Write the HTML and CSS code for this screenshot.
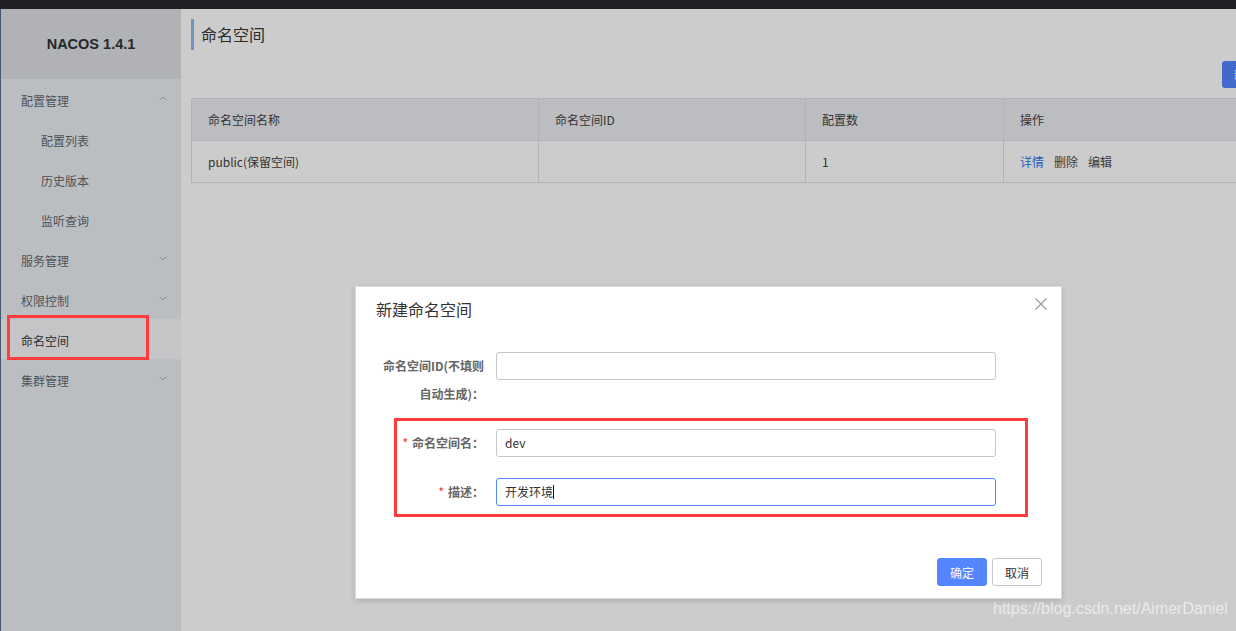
FILE: index.html
```html
<!DOCTYPE html>
<html lang="zh-CN">
<head>
<meta charset="utf-8">
<title>NACOS</title>
<link rel="stylesheet" href="styles.css">
</head>
<body>
<div class="topbar"></div>
<div class="layout">
  <aside class="sidebar">
    <div class="brand">NACOS 1.4.1</div>
    <ul class="menu">
      <li class="item"><span>配置管理</span><svg class="chev" viewBox="0 0 8 5" width="8" height="5"><path d="M0.5 4.5 L4 1 L7.5 4.5" fill="none" stroke="#8a8d92" stroke-width="1"/></svg></li>
      <li class="item sub"><span>配置列表</span></li>
      <li class="item sub"><span>历史版本</span></li>
      <li class="item sub"><span>监听查询</span></li>
      <li class="item"><span>服务管理</span><svg class="chev" viewBox="0 0 8 5" width="8" height="5"><path d="M0.5 0.5 L4 4 L7.5 0.5" fill="none" stroke="#8a8d92" stroke-width="1"/></svg></li>
      <li class="item"><span>权限控制</span><svg class="chev" viewBox="0 0 8 5" width="8" height="5"><path d="M0.5 0.5 L4 4 L7.5 0.5" fill="none" stroke="#8a8d92" stroke-width="1"/></svg></li>
      <li class="item active"><span>命名空间</span><i class="mark mark-menu"></i></li>
      <li class="item"><span>集群管理</span><svg class="chev" viewBox="0 0 8 5" width="8" height="5"><path d="M0.5 0.5 L4 4 L7.5 0.5" fill="none" stroke="#8a8d92" stroke-width="1"/></svg></li>
    </ul>
  </aside>
  <main class="main">
    <div class="content">
      <h1 class="page-title">命名空间</h1>
      <div class="toolbar"><button class="btn-new">新建命名空间</button></div>
      <table class="grid">
        <thead>
          <tr><th class="c1">命名空间名称</th><th class="c2">命名空间ID</th><th class="c3">配置数</th><th>操作</th></tr>
        </thead>
        <tbody>
          <tr><td>public(保留空间)</td><td></td><td>1</td><td><span class="op link">详情</span><span class="op">删除</span><span class="op">编辑</span></td></tr>
        </tbody>
      </table>
    </div>
  </main>
</div>

<div class="dialog">
  <div class="dlg-head">
    <span class="dlg-title">新建命名空间</span>
    <svg class="dlg-close" viewBox="0 0 12 12" width="12" height="12"><path d="M0.5 0.5 L11.5 11.5 M11.5 0.5 L0.5 11.5" stroke="#9a9a9a" stroke-width="1.2" fill="none"/></svg>
  </div>
  <div class="dlg-body">
    <div class="row">
      <label class="lbl">命名空间ID(不填则自动生成)：</label>
      <div class="input"></div>
    </div>
    <div class="group">
      <i class="mark mark-form"></i>
      <div class="row">
        <label class="lbl"><em class="req">*</em>命名空间名：</label>
        <div class="input">dev</div>
      </div>
      <div class="row">
        <label class="lbl"><em class="req">*</em>描述：</label>
        <div class="input focus">开发环境<span class="caret"></span></div>
      </div>
    </div>
  </div>
  <div class="dlg-foot">
    <button class="btn primary">确定</button>
    <button class="btn">取消</button>
  </div>
</div>

<div class="watermark">https://blog.csdn.net/AimerDaniel</div>
</body>
</html>
```

FILE: styles.css
```css
* { box-sizing: border-box; }
html, body { margin: 0; padding: 0; }
body {
  width: 1236px;
  height: 631px;
  overflow: hidden;
  background: #cccccc;
  font-family: "Noto Sans CJK SC", "Noto Sans", sans-serif;
  font-size: 12px;
  color: #333;
  position: relative;
}
.topbar { height: 9px; background: #1f2127; }
.layout { display: flex; height: 622px; }

.sidebar {
  width: 181px;
  flex: none;
  background: #bbbec1;
  border-left: 1px solid #44576b;
}
.brand {
  height: 70px;
  background: #b0b2b6;
  display: flex;
  align-items: center;
  justify-content: center;
  padding-top: 0;
  font-family: "Liberation Sans", Arial, sans-serif;
  font-weight: bold;
  font-size: 14.5px;
  color: #25282d;
}
.menu { list-style: none; margin: 0; padding: 0; }
.item {
  position: relative;
  height: 40px;
  display: flex;
  align-items: center;
  justify-content: space-between;
  padding: 3px 14px 0 20px;
  color: #4e5258;
}
.item.sub { padding-left: 40px; }
.item.active { background: #c5c5c8; color: #2b2b2b; }
.chev { margin-top: -4px; }

.mark { position: absolute; border: 3px solid #ff3b3b; pointer-events: none; }
.mark-menu { left: 6px; top: -4px; width: 142px; height: 45px; }
.mark-form { left: 19px; right: 13px; top: -11px; bottom: -11px; }

.main { flex: 1; overflow: hidden; }
.content { width: 1111px; padding-left: 10px; box-sizing: content-box; }
.page-title {
  margin: 10px 0 0;
  height: 31px;
  border-left: 3px solid #6f94bd;
  padding-left: 7px;
  font-size: 16px;
  font-weight: normal;
  line-height: 30px;
  color: #2a2a2a;
}
.toolbar { display: flex; justify-content: flex-end; margin-top: 11px; }
.btn-new {
  height: 27px;
  width: 80px;
  border: none;
  border-radius: 3px;
  background: #4469cc;
  color: #dde3f5;
  font-family: inherit;
  font-size: 12px;
  padding: 0 0 0 12px;
  text-align: left;
  white-space: nowrap;
  overflow: hidden;
}

.grid {
  margin-top: 10px;
  width: 1111px;
  border-collapse: collapse;
  table-layout: fixed;
}
.grid th, .grid td {
  height: 42px;
  border: 1px solid #b3b3b5;
  padding: 0 16px;
  text-align: left;
  font-weight: normal;
  color: #333;
}
.grid th { background: #bcbdc0; }
.c1 { width: 347px; }
.c2 { width: 267px; }
.c3 { width: 198px; }
.op { margin-right: 10px; color: #3a3a3a; }
.op.link { color: #2462b8; }

.dialog {
  position: absolute;
  left: 355px;
  top: 286px;
  width: 707px;
  height: 313px;
  background: #fff;
  border: 1px solid #dcdcdc;
  box-shadow: 0 2px 6px rgba(0,0,0,0.15);
  display: flex;
  flex-direction: column;
}
.dlg-head {
  display: flex;
  justify-content: space-between;
  align-items: center;
  padding: 9px 14px 14px 20px;
  height: 48px;
}
.dlg-title { font-size: 16px; color: #333; line-height: 24px; }
.dlg-close { margin-top: -9px; }
.dlg-body { padding: 17px 20px 0 19px; flex: 1; }
.row { display: flex; align-items: flex-start; margin-bottom: 21px; }
.group { position: relative; }
.group .row:last-child { margin-bottom: 0; }
.lbl {
  width: 121px;
  flex: none;
  padding-right: 12px;
  text-align: right;
  line-height: 28px;
  font-weight: bold;
  color: #666;
  font-size: 12px;
}
.req { font-style: normal; color: #ff3000; margin-right: 4px; font-weight: normal; }
.input {
  width: 500px;
  height: 28px;
  border: 1px solid #c4c6cf;
  border-radius: 3px;
  padding: 0 8px;
  line-height: 26px;
  color: #333;
  font-size: 12px;
  display: flex;
  align-items: center;
}
.input.focus { border-color: #5584ff; }
.caret { display: inline-block; width: 1px; height: 14px; background: #111; }

.dlg-foot {
  display: flex;
  justify-content: flex-end;
  gap: 5px;
  padding: 0 19px 12px;
}
.btn {
  width: 50px;
  height: 28px;
  border: 1px solid #c4c6cf;
  border-radius: 3px;
  background: #fff;
  color: #333;
  font-family: inherit;
  font-size: 12px;
  padding: 0;
}
.btn.primary { background: #5584ff; border-color: #5584ff; color: #fff; }

.watermark {
  position: absolute;
  left: 993px;
  top: 600px;
  font-family: "Liberation Sans", Arial, sans-serif;
  font-size: 16px;
  color: rgba(255,255,255,0.6);
  white-space: nowrap;
}
```
